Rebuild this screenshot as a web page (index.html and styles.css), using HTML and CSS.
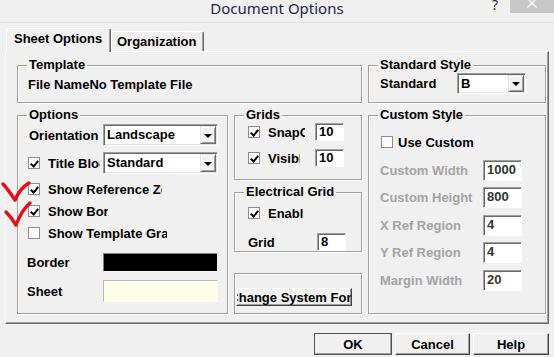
FILE: index.html
```html
<!DOCTYPE html>
<html lang="en">
<head>
    <meta charset="UTF-8">
    <title>Document Options</title>
    <link rel="stylesheet" href="styles.css">
</head>
<body>
    <div class="titlebar">
        <span class="title">Document Options</span>
        <span class="caption-help">?</span>
        <span class="caption-close">
            <svg width="44" height="13" viewBox="0 0 44 13"><path d="M17.5 -1.5 L26.5 7.5 M26.5 -1.5 L17.5 7.5" stroke="#fff" stroke-width="1.2" fill="none"/></svg>
        </span>
    </div>

    <div class="tabs">
        <div class="tab tab-active">Sheet Options</div>
        <div class="tab tab-org">Organization</div>
    </div>

    <div class="panel">
        <fieldset class="group group-template">
            <legend>Template</legend>
            <div class="template-body">File NameNo Template File</div>
        </fieldset>

        <fieldset class="group group-standard">
            <legend>Standard Style</legend>
            <div class="standard-body">
                <span class="standard-label">Standard</span>
                <div class="select select-standard"><span class="select-value">B</span><span class="drop"></span></div>
            </div>
        </fieldset>

        <fieldset class="group group-options">
            <legend>Options</legend>
            <div class="options-body">
                <div class="row row-orient">
                    <span class="orient-label">Orientation</span>
                    <div class="select select-wide"><span class="select-value">Landscape</span><span class="drop"></span></div>
                </div>
                <div class="row row-title">
                    <span class="check checked"></span>
                    <span class="clip clip-title">Title Block</span>
                    <div class="select select-wide"><span class="select-value">Standard</span><span class="drop"></span></div>
                </div>
                <div class="row row-check row-first">
                    <span class="check checked"></span>
                    <span class="clip clip-ref">Show Reference Zones</span>
                </div>
                <div class="row row-check">
                    <span class="check checked"></span>
                    <span class="clip clip-border">Show Border</span>
                </div>
                <div class="row row-check">
                    <span class="check"></span>
                    <span class="clip clip-tpl">Show Template Graphics</span>
                </div>
                <div class="row row-color row-border">
                    <span class="color-label">Border</span>
                    <span class="swatch swatch-black"></span>
                </div>
                <div class="row row-color row-sheet">
                    <span class="color-label">Sheet</span>
                    <span class="swatch swatch-sheet"></span>
                </div>
            </div>
        </fieldset>

        <div class="stack">
            <fieldset class="group group-grids">
                <legend>Grids</legend>
                <div class="mid-body">
                    <div class="row row-snap">
                        <span class="check checked"></span>
                        <span class="clip clip-snap">SnapOn</span>
                        <span class="field-box small-box">10</span>
                    </div>
                    <div class="row row-visible">
                        <span class="check checked"></span>
                        <span class="clip clip-visible">Visible</span>
                        <span class="field-box small-box">10</span>
                    </div>
                </div>
            </fieldset>

            <fieldset class="group group-elec">
                <legend>Electrical Grid</legend>
                <div class="mid-body">
                    <div class="row row-enable">
                        <span class="check checked"></span>
                        <span class="clip clip-enable">Enable</span>
                    </div>
                    <div class="row row-grid">
                        <span class="grid-label">Grid</span>
                        <span class="field-box small-box">8</span>
                    </div>
                </div>
            </fieldset>

            <div class="group group-font">
                <div class="btn btn-font"><span>Change System Font</span></div>
            </div>
        </div>

        <fieldset class="group group-custom">
            <legend>Custom Style</legend>
            <div class="custom-body">
                <div class="row row-use">
                    <span class="check"></span>
                    <span class="use-label">Use Custom</span>
                </div>
                <div class="row field field-first">
                    <span class="dim-label">Custom Width</span>
                    <span class="field-box wide-box">1000</span>
                </div>
                <div class="row field">
                    <span class="dim-label">Custom Height</span>
                    <span class="field-box wide-box">800</span>
                </div>
                <div class="row field field-far">
                    <span class="dim-label">X Ref Region</span>
                    <span class="field-box wide-box">4</span>
                </div>
                <div class="row field">
                    <span class="dim-label">Y Ref Region</span>
                    <span class="field-box wide-box">4</span>
                </div>
                <div class="row field field-far">
                    <span class="dim-label">Margin Width</span>
                    <span class="field-box wide-box">20</span>
                </div>
            </div>
        </fieldset>
    </div>

    <div class="footer">
        <div class="btn btn-ok">OK</div>
        <div class="btn btn-cancel">Cancel</div>
        <div class="btn btn-help">Help</div>
    </div>

    <!-- red hand-drawn ticks over the dialog -->
    <svg class="ticks" width="40" height="60" viewBox="0 0 40 60">
        <path d="M3 14 C7 18 11 24 15 30 C18 23 22 17 29 13" />
        <path d="M6 42 C9 45 13 50 16 55 C19 47 23 39 30 33" />
    </svg>
</body>
</html>
```

FILE: styles.css
```css
* {
    box-sizing: border-box;
}
body {
    margin: 0;
    width: 554px;
    height: 357px;
    overflow: hidden;
    position: relative;
    background: #f0f0f0;
    font-family: "Liberation Sans", Arial, sans-serif;
    font-size: 13px;
    font-weight: bold;
    color: #000;
}
.titlebar {
    height: 23px;
    border-bottom: 1px solid #dedede;
    text-align: center;
    position: relative;
}
.title {
    display: inline-block;
    font-family: "Noto Sans", "Open Sans", sans-serif;
    font-weight: normal;
    font-size: 15px;
    line-height: 16px;
    color: #1e2646;
}
.caption-help {
    position: absolute;
    left: 492px;
    top: -5px;
    font-family: "Noto Sans", sans-serif;
    font-weight: normal;
    font-size: 14px;
    color: #333;
}
.caption-close {
    position: absolute;
    left: 510px;
    top: 0;
    width: 44px;
    height: 13px;
    background: #c7c7c7;
    display: flex;
}

/* tabs */
.tabs {
    display: flex;
    align-items: flex-end;
    height: 28px;
    padding-left: 6px;
}
.tab {
    height: 20px;
    line-height: 19px;
    border-top: 1px solid #fff;
    border-left: 1px solid #fff;
    border-right: 1px solid #696969;
    box-shadow: inset -1px 0 #a0a0a0;
    border-radius: 2px 2px 0 0;
    background: #f0f0f0;
}
.tab-active {
    width: 105px;
    height: 24px;
    line-height: 19px;
    padding-left: 7px;
    margin-bottom: -1px;
    position: relative;
    z-index: 1;
}
.tab-org {
    width: 93px;
    padding-left: 5px;
    line-height: 20px;
}

/* main panel */
.panel {
    margin-left: 5px;
    width: 544px;
    height: 273px;
    border: 1px solid;
    border-color: #fff #696969 #696969 #fff;
    box-shadow: inset -1px -1px #a0a0a0;
    padding: 6px 0 0 11px;
    display: grid;
    grid-template-columns: 211px 128px 178px;
    grid-template-rows: 45px 206px;
    column-gap: 6px;
    row-gap: 5px;
}
.group {
    margin: 0;
    padding: 0;
    min-width: 0;
    border: 1px solid #a0a0a0;
    box-shadow: inset 1px 1px #fff, 1px 1px #fff;
}
.group legend {
    margin-left: 9px;
    padding: 0 2px;
    line-height: 14px;
    background: #f0f0f0;
}
.group-template {
    grid-column: 1 / 3;
}
.template-body {
    padding: 5px 0 0 10px;
    line-height: 15px;
}
.standard-body {
    display: flex;
    align-items: center;
    padding: 1px 0 0 11px;
}
.standard-label {
    width: 77px;
}

.row {
    display: flex;
    align-items: center;
}
.clip {
    white-space: nowrap;
    overflow: hidden;
    margin-left: 8px;
}

/* options */
.options-body {
    padding-left: 11px;
}
.row-orient {
    margin-top: 2px;
    height: 22px;
}
.orient-label {
    width: 74px;
}
.row-title {
    margin-top: 6px;
    height: 22px;
}
.row-title .check,
.row-check .check {
    margin-left: -1px;
}
.clip-title {
    width: 52px;
    margin-right: 3px;
}
.row-check {
    height: 22px;
}
.row-first {
    margin-top: 4px;
}
.clip-ref {
    width: 114px;
}
.clip-border {
    width: 60px;
}
.clip-tpl {
    width: 119px;
}
.color-label {
    width: 76px;
    margin-left: -2px;
}
.row-border {
    margin-top: 9px;
    height: 19px;
}
.row-sheet {
    margin-top: 8px;
    height: 22px;
}
.swatch {
    width: 115px;
    height: 100%;
    border: 1px solid #a0a0a0;
}
.swatch-black {
    background: #000;
    border-color: #808080 #f6f6f6 #f6f6f6 #808080;
}
.swatch-sheet {
    background: #fffde6;
    border-color: #b8b8b8 #fff #fff #b8b8b8;
}

/* controls */
.check {
    width: 12px;
    height: 12px;
    flex-shrink: 0;
    border: 1px solid #8c8c8c;
    background: #fff;
    position: relative;
}
.check.checked::after {
    content: '';
    position: absolute;
    left: 3px;
    top: 1px;
    width: 3px;
    height: 6px;
    border-right: 2px solid #000;
    border-bottom: 2px solid #000;
    transform: rotate(40deg);
}
.select {
    height: 100%;
    border: 1px solid;
    border-color: #a0a0a0 #fff #fff #a0a0a0;
    box-shadow: inset 1px 1px #696969, inset -1px -1px #e3e3e3;
    padding: 1px;
    background: #fff;
    display: flex;
}
.select-wide {
    width: 115px;
}
.select-standard {
    width: 69px;
    height: 21px;
}
.select-value {
    flex: 1;
    padding-left: 2px;
    line-height: 18px;
    background: #fff;
}
.drop {
    width: 16px;
    background: #f0f0f0;
    border: 1px solid;
    border-color: #e3e3e3 #696969 #696969 #e3e3e3;
    box-shadow: inset 1px 1px #fff, inset -1px -1px #a0a0a0;
    display: flex;
    align-items: center;
    justify-content: center;
}
.drop::after {
    content: '';
    border-left: 4px solid transparent;
    border-right: 4px solid transparent;
    border-top: 4px solid #000;
    margin-top: 1px;
}
.field-box {
    display: block;
    height: 100%;
    background: #fff;
    border: 1px solid;
    border-color: #a0a0a0 #fff #fff #a0a0a0;
    box-shadow: inset 1px 1px #696969;
    padding-left: 3px;
    line-height: 17px;
}
.small-box {
    width: 29px;
    line-height: 16px;
}
.wide-box {
    width: 39px;
    color: #333;
}

/* middle column */
.stack {
    display: flex;
    flex-direction: column;
}
.group-grids {
    height: 72px;
}
.group-elec {
    height: 67px;
    margin-top: 5px;
}
.mid-body {
    padding-left: 13px;
}
.row-snap {
    margin-top: 1px;
    height: 18px;
}
.row-visible {
    margin-top: 8px;
    height: 18px;
}
.clip-snap {
    width: 37px;
    margin-right: 10px;
}
.clip-visible {
    width: 32px;
    margin-right: 15px;
}
.row-enable {
    margin-top: 4px;
    height: 20px;
}
.clip-enable {
    width: 35px;
}
.row-grid {
    margin-top: 10px;
    height: 18px;
}
.grid-label {
    width: 69px;
}
.group-font {
    height: 41px;
    margin-top: 21px;
    padding: 14px 0 0 1px;
}

/* buttons */
.btn {
    display: flex;
    align-items: center;
    justify-content: center;
    overflow: hidden;
    white-space: nowrap;
    background: #f0f0f0;
    border: 1px solid;
    border-color: #fff #404040 #404040 #fff;
    box-shadow: inset -1px -1px #a0a0a0;
}
.btn span {
    flex-shrink: 0;
}
.btn-font {
    width: 116px;
    height: 18px;
}
.footer {
    display: flex;
    justify-content: flex-end;
    gap: 3px;
    margin-top: 9px;
    padding-right: 5px;
}
.footer .btn {
    height: 22px;
}
.btn-ok {
    width: 78px;
    border: 1px solid #505050;
}
.btn-cancel {
    width: 75px;
}
.btn-help {
    width: 76px;
}

/* custom style */
.custom-body {
    padding-left: 12px;
}
.row-use {
    margin-top: 10px;
    height: 20px;
}
.use-label {
    margin-left: 5px;
}
.field {
    height: 21px;
    margin-top: 6px;
}
.field-first {
    margin-top: 8px;
}
.field-far {
    margin-top: 7px;
}
.dim-label {
    width: 103px;
    margin-left: -1px;
    color: #a3a3a3;
}

.ticks {
    position: absolute;
    left: 0;
    top: 170px;
}
.ticks path {
    fill: none;
    stroke: #e3101c;
    stroke-width: 3.5;
    stroke-linecap: round;
    stroke-linejoin: round;
}
```
